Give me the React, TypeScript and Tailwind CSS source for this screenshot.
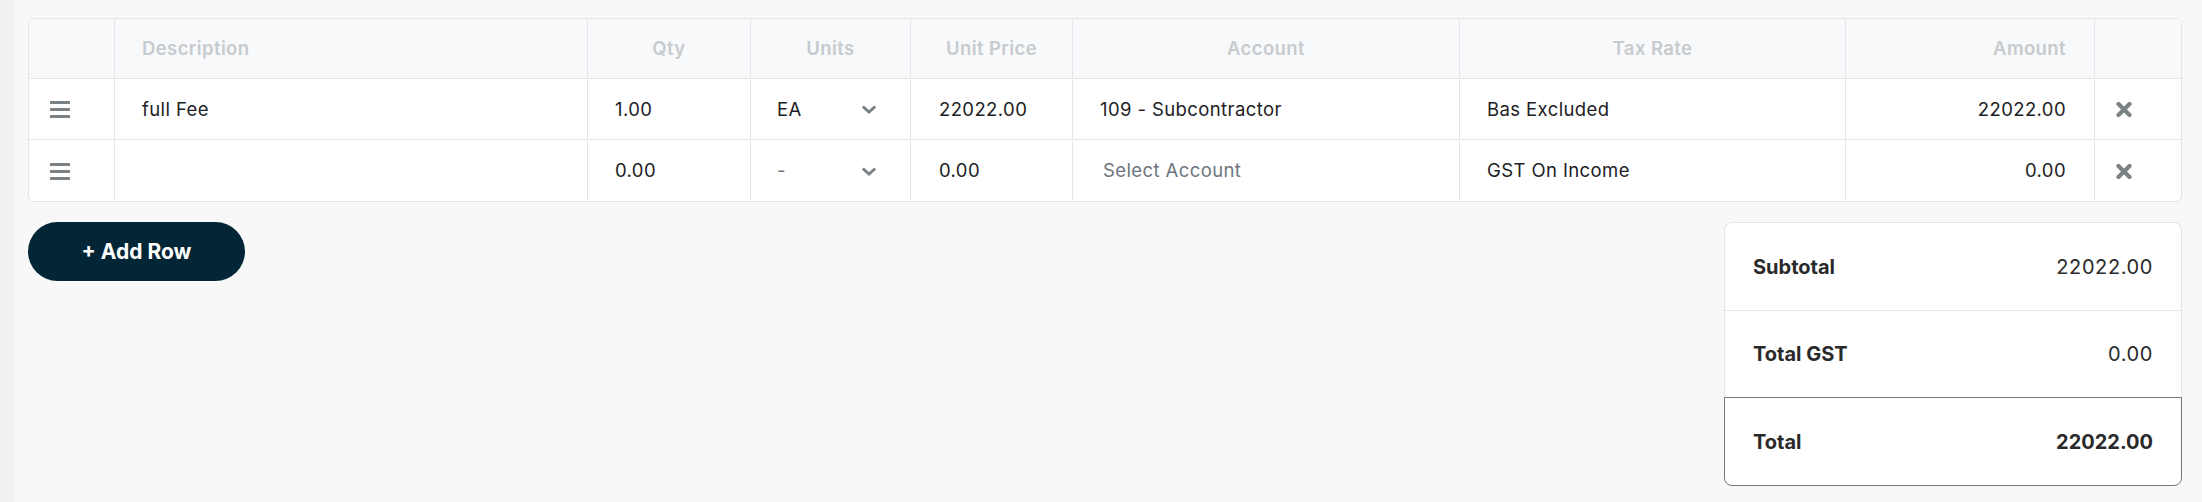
import React from 'react';

type Line = {
  description: string;
  qty: string;
  unit: string;
  unitPrice: string;
  account: string | null;
  taxRate: string;
  amount: string;
};

const LINES: Line[] = [
  {
    description: 'full Fee',
    qty: '1.00',
    unit: 'EA',
    unitPrice: '22022.00',
    account: '109 - Subcontractor',
    taxRate: 'Bas Excluded',
    amount: '22022.00',
  },
  {
    description: '',
    qty: '0.00',
    unit: '-',
    unitPrice: '0.00',
    account: null,
    taxRate: 'GST On Income',
    amount: '0.00',
  },
];

const COLS = 'grid grid-cols-[86px_473px_163px_160px_162px_387px_386px_249px_86px] divide-x divide-[#e3e5e8]';

function DragIcon() {
  return (
    <svg width="20" height="17" viewBox="0 0 20 17" fill="#7b8286">
      <rect x="0" y="0" width="20" height="3" rx="0.5" />
      <rect x="0" y="7" width="20" height="3" rx="0.5" />
      <rect x="0" y="14" width="20" height="3" rx="0.5" />
    </svg>
  );
}

function Chevron() {
  return (
    <svg width="16" height="9" viewBox="0 0 16 9" fill="none">
      <polyline points="1.8,1.5 8,7 14.2,1.5" stroke="#7b8286" strokeWidth="3" />
    </svg>
  );
}

function RemoveIcon() {
  return (
    <svg width="16" height="15" viewBox="0 0 16 15" fill="none">
      <path d="M2.5 2 L13.5 13 M13.5 2 L2.5 13" stroke="#7b8286" strokeWidth="4.2" strokeLinecap="round" />
    </svg>
  );
}

function LineRow({ line }: { line: Line }) {
  return (
    <div className={`${COLS} h-[61px] pt-px text-[18.5px] tracking-[0.4px] text-[#1d2124]`}>
      <div className="flex items-center pl-[21px]">
        <DragIcon />
      </div>
      <div className="flex items-center pl-[27px]">{line.description}</div>
      <div className="flex items-center pl-[27px]">{line.qty}</div>
      <div className="flex items-center justify-between pl-[26px] pr-[33px]">
        <span className={line.unit === '-' ? 'text-[#6c757d]' : ''}>{line.unit}</span>
        <Chevron />
      </div>
      <div className="flex items-center pl-[28px]">{line.unitPrice}</div>
      <div className="flex items-center pl-[27px]">
        {line.account ? line.account : <span className="pl-[3px] text-[#6c757d]">Select Account</span>}
      </div>
      <div className="flex items-center pl-[27px]">{line.taxRate}</div>
      <div className="flex items-center justify-end pr-[28px]">{line.amount}</div>
      <div className="flex items-center pl-[21px]">
        <RemoveIcon />
      </div>
    </div>
  );
}

export default function App() {
  return (
    <div className="flex min-h-[502px] bg-[#f8f8f8]" style={{ fontFamily: 'Inter, "Noto Sans", sans-serif' }}>
      <div className="w-[15px] shrink-0 bg-[#f1f1f1]" />
      <div className="flex-1 pt-[18px] pl-[13px] pr-[20px]">
        {/* line items */}
        <div className="overflow-hidden rounded-md border border-[#e3e5e8] bg-white divide-y divide-[#e3e5e8]">
          <div
            className={`${COLS} h-[60px] bg-[#f8f9fb] text-[18.5px] font-semibold tracking-[0.4px] text-[#c7cbce]`}
          >
            <div />
            <div className="flex items-center pl-[27px]">Description</div>
            <div className="flex items-center justify-center">Qty</div>
            <div className="flex items-center justify-center">Units</div>
            <div className="flex items-center justify-center">Unit Price</div>
            <div className="flex items-center justify-center">Account</div>
            <div className="flex items-center justify-center">Tax Rate</div>
            <div className="flex items-center justify-end pr-[28px]">Amount</div>
            <div />
          </div>
          {LINES.map((line, i) => (
            <LineRow key={i} line={line} />
          ))}
        </div>

        <div className="mt-[20px] flex items-start justify-between">
          <button
            type="button"
            className="h-[59px] w-[217px] rounded-full bg-[#032636] text-[21px] font-bold text-white"
          >
            + Add Row
          </button>

          {/* totals */}
          <div className="w-[458px] text-[20px] text-[#2a2a2a]">
            <div className="rounded-t-lg border border-b-0 border-[#e3e5e8] bg-white">
              <div className="flex h-[87px] items-center justify-between px-[28px]">
                <span className="font-bold">Subtotal</span>
                <span className="tracking-[0.6px]">22022.00</span>
              </div>
              <div className="flex h-[87px] items-center justify-between border-t border-[#e3e5e8] px-[28px]">
                <span className="font-bold">Total GST</span>
                <span className="tracking-[0.6px]">0.00</span>
              </div>
            </div>
            <div className="flex h-[89px] items-center justify-between rounded-b-lg border border-[#6f777c] bg-white px-[28px]">
              <span className="font-bold">Total</span>
              <span className="font-bold">22022.00</span>
            </div>
          </div>
        </div>
      </div>
    </div>
  );
}
